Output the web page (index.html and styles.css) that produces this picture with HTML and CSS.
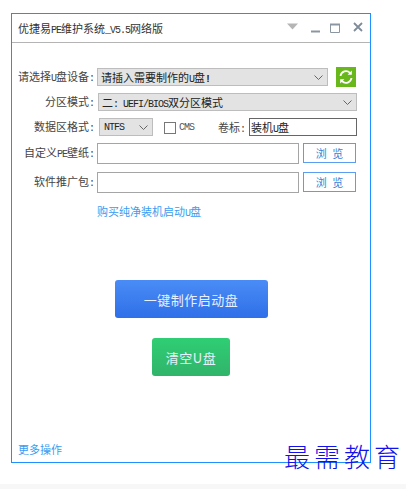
FILE: index.html
```html
<!DOCTYPE html>
<html lang="zh-CN">
<head>
    <meta charset="UTF-8">
    <title>优捷易PE维护系统</title>
    <link rel="stylesheet" href="styles.css">
</head>
<body>
    <div class="window">
        <div class="title-bar">
            <span class="title">优捷易<span class="latin">PE</span>维护系统<span class="latin">_V5.5</span>网络版</span>
            <div class="win-icons">
                <svg class="icon-menu" width="11" height="7" viewBox="0 0 11 7"><path d="M0 .5h11L5.5 6.5z" fill="#b5b5b5"/></svg>
                <svg class="icon-min" width="9" height="10" viewBox="0 0 9 10"><path d="M0 8.5h9" stroke="#8a97a3" stroke-width="2"/></svg>
                <svg class="icon-max" width="10" height="10" viewBox="0 0 10 10"><path d="M.5 1.5h9v8h-9z" fill="none" stroke="#8a97a3"/><path d="M0 1.5h10" stroke="#8a97a3" stroke-width="2"/></svg>
                <svg class="icon-close" width="10" height="10" viewBox="0 0 10 10"><path d="M1 1l8 8M9 1l-8 8" stroke="#7f8c98" stroke-width="1.8"/></svg>
            </div>
        </div>

        <div class="content">
            <div class="row row-device">
                <label class="field-label">请选择<span class="latin">U</span>盘设备<span class="latin">:</span></label>
                <div class="select select-device">
                    <span>请插入需要制作的<span class="latin">U</span>盘<span class="latin bold">!</span></span>
                    <svg class="chevron" width="9" height="5" viewBox="0 0 9 5"><path d="M.5.5l4 4 4-4" fill="none" stroke="#666"/></svg>
                </div>
                <div class="refresh">
                    <svg width="16" height="16" viewBox="0 0 16 16">
                        <path d="M2.5 7A5.6 5.6 0 0 1 12 3.8" fill="none" stroke="#fff" stroke-width="1.8"/>
                        <path d="M13.8 1.5v4.2H9.6z" fill="#fff"/>
                        <path d="M13.5 9A5.6 5.6 0 0 1 4 12.2" fill="none" stroke="#fff" stroke-width="1.8"/>
                        <path d="M2.2 14.5v-4.2h4.2z" fill="#fff"/>
                    </svg>
                </div>
            </div>

            <div class="row row-mode">
                <label class="field-label">分区模式<span class="latin">:</span></label>
                <div class="select select-mode">
                    <span>二<span class="latin">: UEFI/BIOS</span>双分区模式</span>
                    <svg class="chevron" width="9" height="5" viewBox="0 0 9 5"><path d="M.5.5l4 4 4-4" fill="none" stroke="#666"/></svg>
                </div>
            </div>

            <div class="row row-format">
                <label class="field-label">数据区格式<span class="latin">:</span></label>
                <div class="select select-format">
                    <span class="latin">NTFS</span>
                    <svg class="chevron" width="9" height="5" viewBox="0 0 9 5"><path d="M.5.5l4 4 4-4" fill="none" stroke="#666"/></svg>
                </div>
                <span class="checkbox"></span>
                <span class="latin check-text">CMS</span>
                <label class="volume-label">卷标<span class="latin">:</span></label>
                <div class="input input-volume">装机<span class="latin">U</span>盘</div>
            </div>

            <div class="row row-file">
                <label class="field-label">自定义<span class="latin">PE</span>壁纸<span class="latin">:</span></label>
                <div class="input input-file"></div>
                <div class="browse">浏 览</div>
            </div>

            <div class="row row-file row-file-2">
                <label class="field-label">软件推广包<span class="latin">:</span></label>
                <div class="input input-file"></div>
                <div class="browse">浏 览</div>
            </div>

            <a class="buy-link">购买纯净装机启动<span class="latin">U</span>盘</a>

            <div class="actions">
                <div class="btn btn-make">一键制作启动盘</div>
                <div class="btn btn-clear">清空U盘</div>
            </div>

            <a class="more-link">更多操作</a>
        </div>
    </div>

    <div class="watermark">最需教育</div>
    <div class="page-strip"></div>
</body>
</html>
```

FILE: styles.css
```css
html, body {
    margin: 0;
    height: 489px;
    overflow: hidden;
}

body {
    position: relative;
    background-color: #fff;
    color: #444;
    font-family: "Noto Sans CJK SC", "Liberation Sans", sans-serif;
    font-size: 11px;
    padding-top: 13px;
    box-sizing: border-box;
}

.latin {
    font-family: "Liberation Mono", "Noto Sans CJK SC", monospace;
    font-size: 10px;
    letter-spacing: -1px;
}

.bold {
    font-weight: bold;
}

.window {
    box-sizing: border-box;
    width: 360px;
    height: 450px;
    margin-left: 11px;
    border: 1px solid #1e90ff;
    display: flex;
    flex-direction: column;
}

.title-bar {
    height: 28px;
    flex-shrink: 0;
    border-bottom: 1px solid #b4b4b4;
    display: flex;
    align-items: center;
    justify-content: space-between;
    padding: 0 7px 0 6px;
}

.title {
    color: #333;
}

.win-icons {
    display: flex;
    align-items: center;
}

.icon-menu {
    margin-top: -3px;
}

.icon-min {
    margin-left: 13px;
}

.icon-max {
    margin-left: 10px;
}

.icon-close {
    margin-left: 13px;
    margin-top: -2px;
}

.content {
    flex-grow: 1;
    display: flex;
    flex-direction: column;
    padding-top: 24px;
}

.row {
    display: flex;
    align-items: center;
}

.field-label {
    width: 82px;
    margin-right: 3px;
    text-align: right;
    white-space: nowrap;
    line-height: 16px;
}

.select {
    box-sizing: border-box;
    background-color: #e3e3e3;
    border: 1px solid #bdbdbd;
    display: flex;
    align-items: center;
    justify-content: space-between;
    padding: 0 4px 0 3px;
    white-space: nowrap;
    color: #222;
}

.input {
    box-sizing: border-box;
    background-color: #fff;
    border: 1px solid #a5a5a5;
    white-space: nowrap;
}

.row-device {
    height: 20px;
}

.select-device {
    width: 231px;
    height: 18px;
}

.refresh {
    width: 20px;
    height: 20px;
    margin-left: 8px;
    background-color: #68b81c;
    display: flex;
    align-items: center;
    justify-content: center;
}

.row-mode {
    height: 18px;
    margin-top: 6px;
}

.select-mode {
    width: 259px;
    height: 18px;
    margin-left: 1px;
}

.row-format {
    height: 18px;
    margin-top: 7px;
}

.select-format {
    width: 54px;
    height: 18px;
    margin-left: 2px;
    padding-left: 4px;
}

.checkbox {
    box-sizing: border-box;
    width: 12px;
    height: 12px;
    margin: 1px 0 0 11px;
    border: 1px solid #777;
    background-color: #fff;
}

.check-text {
    margin-left: 3px;
    width: 16px;
    color: #555;
}

.volume-label {
    margin-left: 23px;
    width: 31px;
    white-space: nowrap;
}

.input-volume {
    width: 108px;
    height: 18px;
    line-height: 16px;
    border-color: #666;
    padding-left: 1px;
    color: #222;
}

.row-file {
    height: 21px;
    margin-top: 7px;
}

.row-file-2 {
    margin-top: 8px;
}

.input-file {
    width: 202px;
    height: 21px;
}

.browse {
    box-sizing: border-box;
    width: 53px;
    height: 20px;
    margin-left: 4px;
    align-self: flex-start;
    border: 1px solid #5b9df0;
    color: #3a7fd5;
    text-align: center;
    line-height: 18px;
    word-spacing: 3px;
}

.buy-link {
    margin: 10px 0 0 85px;
    color: #3a9cf0;
    line-height: 16px;
}

.actions {
    display: flex;
    flex-direction: column;
    align-items: center;
    gap: 20px;
    margin-top: 58px;
}

.btn {
    box-sizing: border-box;
    height: 38px;
    border-radius: 3px;
    color: #e8f1ff;
    font-size: 13px;
    letter-spacing: 0.5px;
    display: flex;
    align-items: center;
    justify-content: center;
}

.btn-make {
    width: 153px;
    background: linear-gradient(#4a8cf6, #2f6fe8);
}

.btn-clear {
    width: 78px;
    background: linear-gradient(#2fce74, #31b46a);
}

.more-link {
    margin: auto 0 5px 6px;
    color: #3b9bf0;
    line-height: 16px;
}

/* lies over the window's lower right corner */
.watermark {
    position: absolute;
    left: 284px;
    top: 440px;
    color: #1212e6;
    font-size: 26px;
    font-weight: 300;
    line-height: 32px;
    white-space: nowrap;
    letter-spacing: 4px;
}

.page-strip {
    position: absolute;
    left: 0;
    right: 0;
    bottom: 0;
    height: 5px;
    background-color: #f7f7f7;
}
```
